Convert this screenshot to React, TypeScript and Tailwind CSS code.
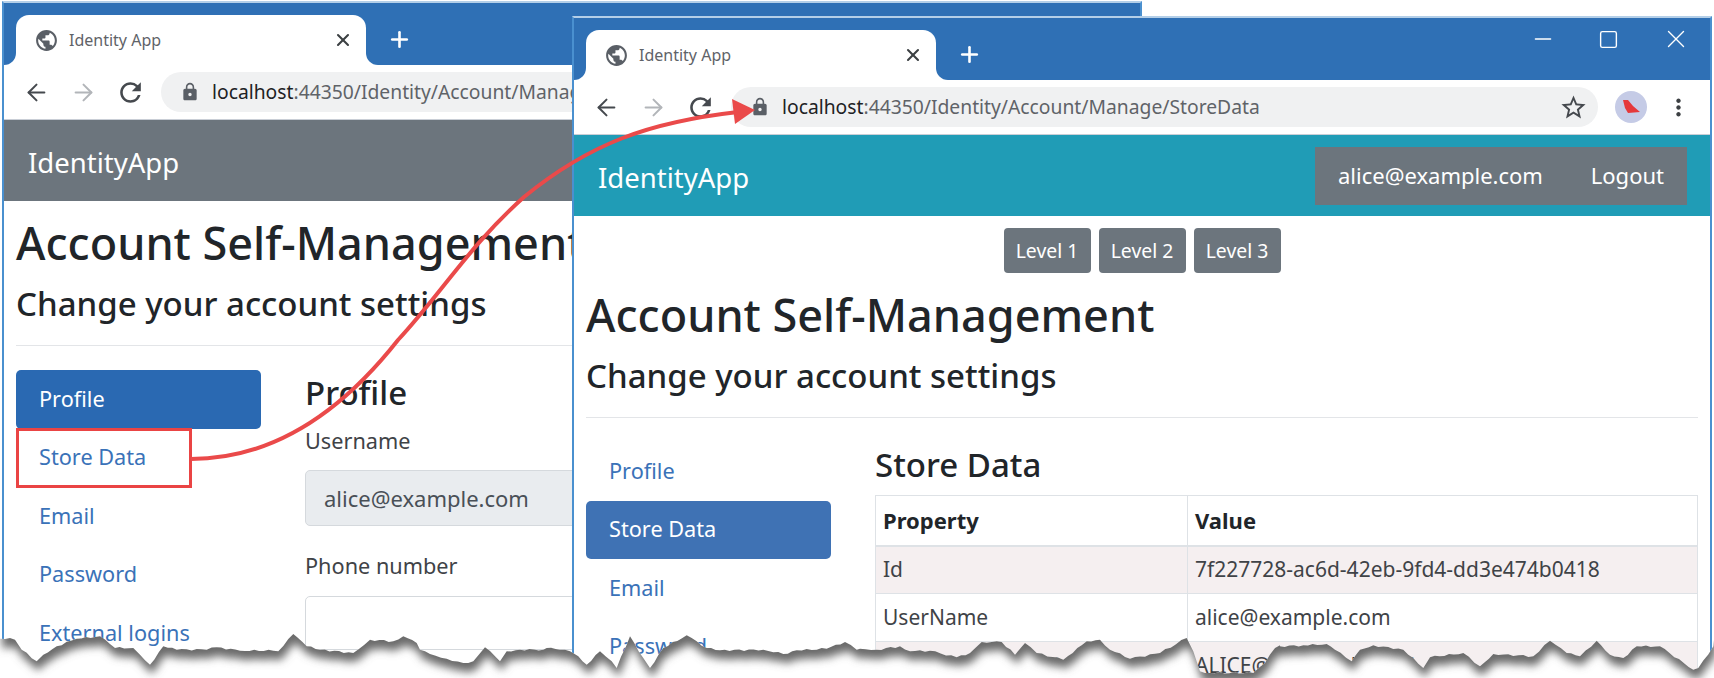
import type { ReactNode } from 'react'
import { ArrowLeft, ArrowRight, Minus, Plus, Square, X } from 'lucide-react'
import { MdLock, MdMoreVert, MdPublic, MdRefresh, MdStarBorder } from 'react-icons/md'

// edge of the torn paper, traced per crop as [x, y] at 3x, offset by the crop's left
const tornCrops: [number, number[][]][] = [
  [0, [[0, 62], [30, 60], [45, 65], [65, 95], [110, 130], [130, 110], [170, 85], [230, 62], [300, 55], [345, 90], [400, 90], [420, 110], [450, 140], [490, 85], [530, 95], [620, 95], [650, 88], [720, 98], [820, 98], [835, 100], [880, 48], [920, 85], [960, 95], [1060, 105], [1110, 65], [1180, 70], [1210, 55], [1250, 75], [1260, 95]]],
  [430, [[0, 108], [50, 122], [100, 135], [130, 130], [165, 88], [195, 115], [210, 130], [230, 100], [270, 95], [340, 95], [350, 90], [390, 95], [420, 100], [445, 115], [470, 140], [510, 100], [545, 130], [560, 150], [600, 55], [640, 120], [660, 150], [700, 90], [770, 52], [830, 90], [870, 97], [1000, 95], [1060, 108], [1100, 97], [1190, 92], [1245, 72], [1280, 95]]],
  [860, [[0, 92], [50, 95], [120, 85], [150, 100], [210, 98], [290, 118], [330, 105], [365, 72], [425, 72], [465, 110], [495, 75], [530, 105], [610, 125], [680, 70], [720, 65], [750, 95], [810, 122], [900, 105], [980, 60], [1000, 100], [1020, 160], [1050, 165], [1180, 165], [1215, 135], [1245, 90], [1260, 82]]],
  [1280, [[0, 85], [70, 82], [140, 78], [165, 95], [215, 130], [240, 95], [280, 82], [370, 95], [430, 150], [450, 118], [550, 105], [600, 145], [640, 108], [760, 115], [810, 68], [860, 105], [900, 115], [950, 68], [990, 110], [1030, 120], [1070, 85], [1140, 85], [1240, 155], [1255, 150], [1300, 85]]],
]

const tornPoints = tornCrops.flatMap(([left, points]) => points.map(([x, y]) => [left + x / 3, 618 + y / 3]))

// add a small fray between the traced points so the edge is not a clean polyline
const tornEdge = tornPoints.flatMap(([x, y], i) => {
  const next = tornPoints[i + 1]
  if (!next) return [`${x},${y}`]
  const steps = Math.max(1, Math.round((next[0] - x) / 5))
  return Array.from({ length: steps }, (_, s) => {
    const t = s / steps
    const fray = s === 0 ? 0 : Math.sin(i * 7.3 + s * 2.1) * 0.9
    return `${(x + (next[0] - x) * t).toFixed(1)},${(y + (next[1] - y) * t + fray).toFixed(1)}`
  })
})
const tornRegion = `M${tornEdge.join(' L')} L1714,640 L1714,678 L0,678 Z`
const paperRegion = `M${tornEdge.join(' L')} L1714,640 L1714,0 L0,0 Z`

function BrowserWindow({
  url,
  navColor,
  navRight,
  controls,
  className,
  children,
}: {
  url: string
  navColor: string
  navRight?: ReactNode
  controls?: boolean
  className: string
  children: ReactNode
}) {
  return (
    <div className={`absolute flex flex-col overflow-hidden border-x-2 border-t-2 border-x-[#4a90cf] border-t-[#b4cfe8] bg-white ${className}`}>
      <div className="relative flex h-[62px] shrink-0 items-end bg-[#2f70b5] pl-3">
        <div className="relative flex h-[50px] w-[350px] items-center rounded-t-[13px] bg-white pr-[13px] pl-[18px]">
          <span className="absolute bottom-0 -left-3 size-3 bg-white">
            <span className="block size-full rounded-br-[12px] bg-[#2f70b5]" />
          </span>
          <span className="absolute -right-3 bottom-0 size-3 bg-white">
            <span className="block size-full rounded-bl-[12px] bg-[#2f70b5]" />
          </span>
          <MdPublic size={25} className="shrink-0 text-[#5a5f66]" />
          <span className="ml-[10px] flex-1 text-[16px] text-[#5f6368]">Identity App</span>
          <X size={20} strokeWidth={2.5} className="text-[#3c4043]" />
        </div>
        <Plus size={25} strokeWidth={2.5} className="mb-[13px] ml-[21px] text-white" />
        {controls && (
          <div className="absolute top-[6px] right-[19px] flex items-center gap-[42px] text-white">
            <Minus size={26} strokeWidth={1.3} />
            <Square size={21} strokeWidth={1.6} />
            <X size={30} strokeWidth={1.1} />
          </div>
        )}
      </div>

      <div className="flex h-[55px] shrink-0 items-center border-b border-[#c9ced6] bg-white pl-[19px] text-[#45494e]">
        <ArrowLeft size={27} strokeWidth={1.8} />
        <ArrowRight size={27} strokeWidth={1.8} className="ml-[20px] text-[#b2b5b9]" />
        <MdRefresh size={31} className="ml-[18px]" />
        <div className="ml-[15px] flex h-[40px] w-[867px] shrink-0 items-center rounded-full bg-[#f0f1f2] pl-[19px]">
          <MdLock size={20} className="shrink-0 text-[#5a5f66]" />
          <span className="ml-3 text-[19.3px] whitespace-nowrap text-[#5f6368]">
            <span className="text-[#202124]">localhost</span>
            {url}
          </span>
          {controls && <MdStarBorder size={29} className="mr-[10px] ml-auto text-[#45494e]" />}
        </div>
        {controls && (
          <>
            <div className="ml-[17px] flex size-8 shrink-0 items-center justify-center rounded-full bg-[#c5cbe6]">
              <svg width="32" height="32" viewBox="0 0 32 32">
                <path d="M8 9 L13 9 L18 15 L25 21 L13 22 L10 17 Z" fill="#e5383b" />
              </svg>
            </div>
            <MdMoreVert size={27} className="ml-[18px] shrink-0 text-[#3c4043]" />
          </>
        )}
      </div>

      <div className={`flex h-[81px] shrink-0 items-center justify-between pr-[23px] pl-[24px] ${navColor}`}>
        <span className="pt-1 text-[27.5px] text-white">IdentityApp</span>
        {navRight}
      </div>

      <div className="flex-1 px-3">{children}</div>
    </div>
  )
}

function PageHeading() {
  return (
    <>
      <h1 className="h-14 text-[45px] leading-[56px] font-medium whitespace-nowrap text-[#212529]">Account Self-Management</h1>
      <h2 className="mt-[13px] h-10 text-[33px] leading-10 font-medium whitespace-nowrap text-[#212529]">Change your account settings</h2>
      <hr className="mt-[21px] border-[#e3e5e8]" />
    </>
  )
}

function SideNav({ active, pillColor }: { active: string; pillColor: string }) {
  const items = ['Profile', 'Store Data', 'Email', 'Password', 'External logins']
  return (
    <div className="w-[245px] shrink-0">
      {items.map((item) => (
        <div
          key={item}
          className={`flex h-[58.5px] items-center rounded-[5px] px-[23px] text-[21.7px] ${item === active ? `${pillColor} text-white` : 'text-[#3a72b8]'}`}
        >
          {item}
        </div>
      ))}
    </div>
  )
}

function ProfileForm() {
  return (
    <div className="flex-1 text-[#212529]">
      <h3 className="h-11 text-[33px] leading-[46px] font-medium">Profile</h3>
      <p className="mt-3 h-[30px] text-[21.7px] leading-[30px] text-[#3f4347]">Username</p>
      <div className="mt-[14px] flex h-14 items-center rounded-[5px] border border-[#d5d9dd] bg-[#e9ecef] px-[18px] text-[22px] text-[#495057]">
        alice@example.com
      </div>
      <p className="mt-[25px] h-[30px] text-[21.7px] leading-[30px] text-[#3f4347]">Phone number</p>
      <div className="mt-[15px] h-[54px] rounded-[5px] border border-[#d5d9dd] bg-white" />
    </div>
  )
}

function StoreDataTable() {
  const rows = [
    ['Id', '7f227728-ac6d-42eb-9fd4-dd3e474b0418'],
    ['UserName', 'alice@example.com'],
    ['NormalizedUserName', 'ALICE@EXAMPLE.COM'],
  ]
  return (
    <div className="flex-1 text-[#212529]">
      <h3 className="h-[46px] text-[33px] leading-[46px] font-medium">Store Data</h3>
      <table className="mt-[7px] w-[823px] table-fixed border-collapse text-[21px]">
        <thead>
          <tr className="h-[50px] border-b-2 border-[#dee2e6] text-[22px] font-bold">
            <th className="w-[312px] border border-b-2 border-[#dee2e6] px-[7px] text-left">Property</th>
            <th className="border border-b-2 border-[#dee2e6] px-[7px] text-left">Value</th>
          </tr>
        </thead>
        <tbody>
          {rows.map(([name, value], i) => (
            <tr key={name} className={`h-[48px] ${i % 2 === 0 ? 'bg-[#f5eff0]' : 'bg-white'}`}>
              <td className="border border-[#dee2e6] px-[7px] text-[#3f4347]">{name}</td>
              <td className="border border-[#dee2e6] px-[7px] text-[#3f4347]">{value}</td>
            </tr>
          ))}
        </tbody>
      </table>
    </div>
  )
}

export default function App() {
  return (
    <div className="relative h-[678px] w-[1714px] overflow-hidden bg-white font-['Noto_Sans',sans-serif]">
      <BrowserWindow url=":44350/Identity/Account/Manage" navColor="bg-[#6c757d]" className="top-px left-[2px] h-[677px] w-[1140px]">
        <div className="pt-[14px]">
          <PageHeading />
          <div className="mt-6 flex gap-[44px]">
            <SideNav active="Profile" pillColor="bg-[#2a69b2]" />
            <ProfileForm />
          </div>
        </div>
      </BrowserWindow>

      <BrowserWindow
        url=":44350/Identity/Account/Manage/StoreData"
        navColor="bg-[#209cb6]"
        controls
        className="top-4 left-[572px] h-[662px] w-[1140px]"
        navRight={
          <div className="flex h-[58px] w-[372px] items-center justify-between bg-[#6c757d] px-[23px] text-[22px] text-white">
            <span>alice@example.com</span>
            <span>Logout</span>
          </div>
        }
      >
        <div className="mt-3 flex justify-center gap-2">
          {['Level 1', 'Level 2', 'Level 3'].map((level) => (
            <div key={level} className="flex h-[45px] w-[87px] items-center justify-center rounded-[4px] bg-[#6c757d] text-[19.4px] text-white">
              {level}
            </div>
          ))}
        </div>
        <div className="mt-[14px]">
          <PageHeading />
          <div className="mt-6 flex gap-[44px]">
            <SideNav active="Store Data" pillColor="bg-[#3f72b4]" />
            <StoreDataTable />
          </div>
        </div>
      </BrowserWindow>

      {/* annotation: box round the link and the arrow to the address bar, then the torn bottom edge */}
      <div className="absolute top-[428px] left-4 h-[60px] w-[176px] border-[3px] border-[#ea4444]" />
      <svg className="pointer-events-none absolute inset-0" width="1714" height="678" viewBox="0 0 1714 678">
        <defs>
          <filter id="tornBlur" x="-2%" y="-5%" width="104%" height="115%">
            <feGaussianBlur stdDeviation="4" />
          </filter>
          <clipPath id="tornClip">
            <path d={tornRegion} />
          </clipPath>
        </defs>
        <path d="M191 459 C265 459 335 420 398 340 C440 295 470 245 524 197 C590 143 650 122 738 112" fill="none" stroke="#ea4a4a" strokeWidth="4" />
        <path d="M755 110 L732 99 L735 124 Z" fill="#ea4a4a" />
        <path d={tornRegion} fill="#ffffff" />
        <g clipPath="url(#tornClip)">
          <path d={paperRegion} fill="#6a6a6a" filter="url(#tornBlur)" transform="translate(2 9)" />
        </g>
      </svg>
    </div>
  )
}
